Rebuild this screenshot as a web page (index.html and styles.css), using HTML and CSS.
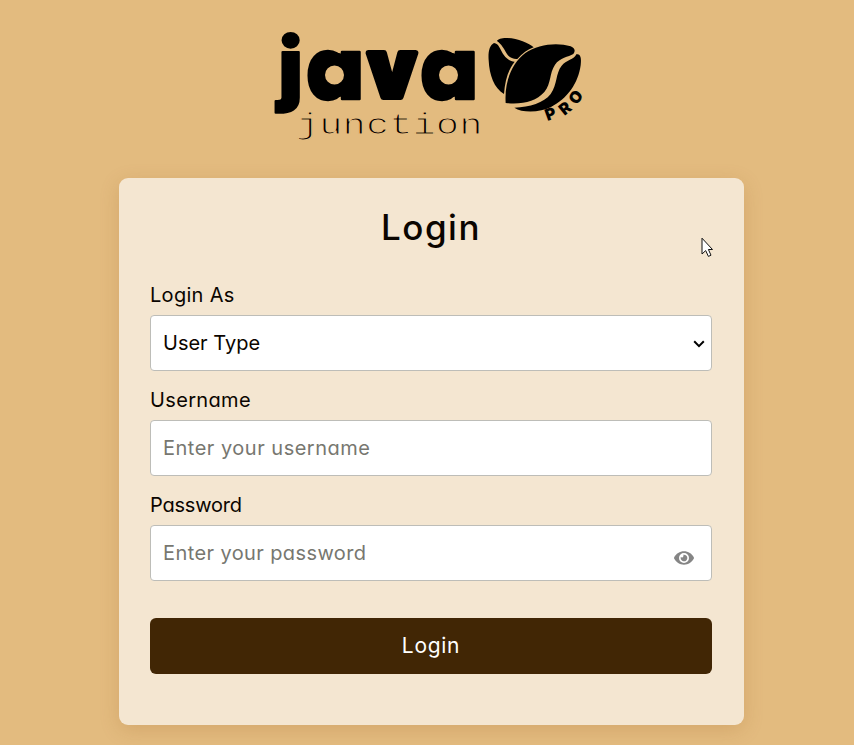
FILE: index.html
```html
<!DOCTYPE html>
<html lang="en">
<head>
<meta charset="utf-8">
<title>Java Junction Pro - Login</title>
<link rel="stylesheet" href="styles.css">
</head>
<body>
<header class="brand">
  <svg class="logo" viewBox="265 0 330 178" role="img" aria-label="java junction PRO">
    <g class="logo-java">
      <text transform="translate(278.500 95.500) scale(.9)" textLength="27" lengthAdjust="spacingAndGlyphs">j</text>
      <text transform="translate(306 99) scale(1 .96)" textLength="58" lengthAdjust="spacingAndGlyphs">a</text>
      <text class="logo-v" x="368" y="97" textLength="48" lengthAdjust="spacingAndGlyphs">v</text>
      <text transform="translate(420 99) scale(1 .96)" textLength="58" lengthAdjust="spacingAndGlyphs">a</text>
    </g>
    <g class="logo-bowl">
      <circle cx="334.500" cy="75" r="16"/>
      <circle cx="448.500" cy="75" r="16"/>
    </g>
    <text class="logo-junction" transform="translate(296 133.500) scale(1.34 1)">junction</text>
    <g transform="translate(475 25) scale(.33333)">
      <path d="M66 48C72 35 113 37 143 49C158 55 169 61 176 67C157 74 143 85 127 102C116 103 103 98 96 87C86 70 80 58 66 48Z"/>
      <path d="M41 106C39 81 43 61 57 54C72 55 75 74 87 91C96 103 107 109 119 110C99 135 90 166 87 207C57 190 43 150 41 106Z"/>
      <path d="M92 234C88 172 109 116 151 84C188 58 246 51 287 64C300 69 302 79 295 87C280 96 255 98 240 119C222 146 230 174 208 201C182 230 141 239 92 234Z"/>
      <path d="M118 248C165 246 206 234 227 207C248 177 241 146 260 122C273 106 298 103 304 88C316 85 320 97 317 121C310 174 277 222 228 246C197 262 143 265 118 248Z"/>
    </g>
    <g class="logo-pro">
      <text transform="translate(547.500 121) rotate(-20)">P</text>
      <text transform="translate(564.500 116) rotate(-39)">R</text>
      <text transform="translate(576.500 105.500) rotate(-53)">O</text>
    </g>
  </svg>
</header>
<main class="card">
  <h1>Login</h1>
  <form>
    <label class="label-as" for="type">Login As</label>
    <div class="field">
      <select id="type"><option>User Type</option></select>
      <svg class="chevron" viewBox="0 0 12 8"><path d="M1.200 1.300L6 6.100L10.800 1.300"/></svg>
    </div>
    <label class="label-user" for="user">Username</label>
    <div class="field"><input id="user" type="text" placeholder="Enter your username"></div>
    <label class="label-pass" for="pass">Password</label>
    <div class="field">
      <input id="pass" type="password" placeholder="Enter your password">
      <svg class="eye" viewBox="0 0 576 512"><path d="M572.500 241.400C518.300 135.600 410.900 64 288 64S57.700 135.600 3.500 241.400a32.400 32.400 0 0 0 0 29.200C57.700 376.400 165.100 448 288 448s230.300-71.600 284.500-177.400a32.400 32.400 0 0 0 0-29.200zM288 400a144 144 0 1 1 144-144 143.900 143.900 0 0 1-144 144zm0-240a95.300 95.300 0 0 0-25.300 3.800 47.900 47.900 0 0 1-66.900 66.900A95.800 95.800 0 1 0 288 160z"/></svg>
    </div>
    <button type="button">Login</button>
  </form>
</main>
<svg class="cursor" viewBox="0 0 13 21"><path d="M1 1.200V17L4.700 13.600L7.400 19.400L10 18.200L7.400 12.500H11.500Z"/></svg>
</body>
</html>
```
FILE: styles.css
```css
* { box-sizing: border-box; }
body {
  margin: 0;
  height: 745px;
  overflow: hidden;
  position: relative;
  background: #e3bb7f;
  color: #0b0500;
  font-family: Inter, "Open Sans", sans-serif;
  font-feature-settings: "cv11", "ss03";
  font-size: 20px;
  font-weight: 380;
}
.brand { height: 178px; padding-left: 265px; }
.logo { display: block; width: 330px; height: 178px; overflow: visible; }
.logo-java {
  font-size: 90px;
  font-weight: 900;
  stroke: #000;
  stroke-width: 2.500px;
  stroke-linejoin: round;
}
.logo-v { stroke-width: 6px; font-size: 80px; }
.logo-bowl { fill: #e3bb7f; stroke: #000; stroke-width: 13px; }
.logo-junction {
  font: 29px "Liberation Mono", monospace;
  stroke: #e3bb7f;
  stroke-width: 1.100px;
}
.logo-pro { font-size: 16px; font-weight: 900; }
.card {
  width: 625px;
  height: 547px;
  margin-left: 119px;
  padding: 27px 32px 0 31px;
  border-radius: 9px;
  background: #f4e6d1;
  box-shadow: 0 5px 20px rgba(150, 90, 30, .2);
}
h1 {
  margin: 0 0 34px;
  font-size: 35px;
  line-height: 44px;
  font-weight: 500;
  letter-spacing: 1.500px;
  text-align: center;
}
label { display: block; height: 32px; line-height: 24px; }
.label-as { letter-spacing: .3px; }
.label-user { letter-spacing: .35px; }
.label-pass { letter-spacing: -.2px; }
.field { position: relative; height: 56px; margin-bottom: 17px; }
input, select {
  display: block;
  width: 100%;
  height: 56px;
  margin: 0;
  padding: 0 12px;
  border: 1px solid #bdbdb8;
  border-radius: 4px;
  background: #fff;
  color: #0b0500;
  font: inherit;
  font-feature-settings: inherit;
  appearance: none;
}
input { letter-spacing: .5px; }
#pass { letter-spacing: .4px; }
input::placeholder { color: #777770; opacity: 1; }
.chevron { position: absolute; right: 7px; top: 25px; width: 12px; height: 8px; fill: none; stroke: #000; stroke-width: 2px; }
.eye { position: absolute; right: 18px; top: 24px; width: 20px; height: 18px; fill: #858585; }
button {
  display: block;
  width: 100%;
  height: 56px;
  margin-top: 37px;
  padding: 0 0 2px;
  border: 0;
  border-radius: 6px;
  background: #412605;
  color: #fff;
  font: inherit;
  font-feature-settings: inherit;
  font-size: 21px;
  font-weight: 400;
  letter-spacing: .7px;
}
.cursor { position: absolute; left: 701px; top: 237px; width: 13px; height: 21px; fill: #fff; stroke: #111; stroke-width: 1px; }
```
